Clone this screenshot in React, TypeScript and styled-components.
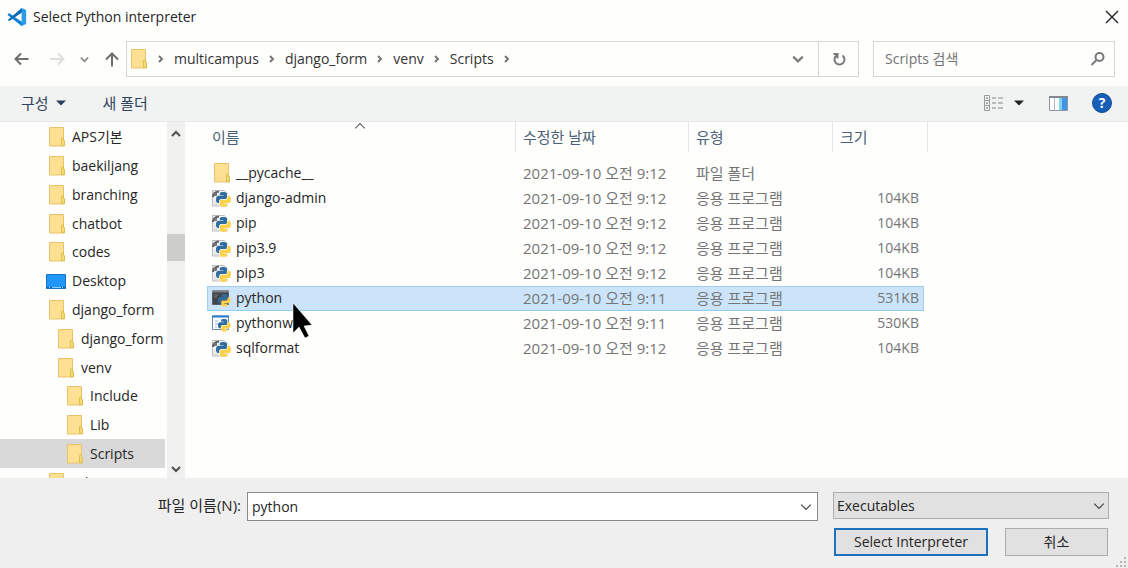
import React from "react";
import styled, { createGlobalStyle, css } from "styled-components";

const GlobalStyle = createGlobalStyle`
  *, *::before, *::after { box-sizing: border-box; }
  body { margin: 0; background: #fefefd; }
  body, button, input, select, table {
    font-family: "Open Sans", "Noto Sans CJK KR", sans-serif;
    font-size: 14px;
    line-height: 20px;
    color: #262626;
  }
  svg { display: block; flex: none; }
`;

const Dialog = styled.main`
  display: flex;
  flex-direction: column;
  height: 100vh;
  background: #fefefd;
`;

const TitleBar = styled.header`
  display: flex;
  align-items: center;
  gap: 6px;
  height: 34px;
  padding: 0 9px 0 7px;
`;

const Title = styled.h1`
  flex: 1;
  margin: 0;
  font-size: 14px;
  font-weight: 400;
`;

const PlainButton = styled.button`
  display: flex;
  align-items: center;
  justify-content: center;
  padding: 0;
  border: 0;
  background: transparent;
`;

const NavBar = styled.nav`
  display: flex;
  align-items: center;
  height: 52px;
  padding: 0 13px 2px;
`;

const HistoryButtons = styled.div`
  display: flex;
  align-items: center;
  gap: 15px;
  width: 113px;
`;

const BackForward = styled.div`
  display: flex;
  gap: 20px;
`;

const AddressBar = styled.div`
  display: flex;
  flex: 1;
  height: 36px;
  margin-right: 14px;
  border: 1px solid #d6d6d6;
`;

const Crumbs = styled.ol`
  display: flex;
  flex: 1;
  align-items: center;
  margin: 0;
  padding: 0 0 0 1px;
  list-style: none;
`;

const Crumb = styled.li`
  display: flex;
  align-items: center;
  gap: 8px;
  padding-right: 8px;
`;

const CrumbLink = styled.a`
  color: #333;
  text-decoration: none;
`;

const AddressButton = styled(PlainButton)<{ $divided?: boolean }>`
  width: 40px;
  border-left: ${(p) => (p.$divided ? "1px solid #d6d6d6" : "0")};
`;

const SearchBox = styled.label`
  display: flex;
  align-items: center;
  width: 242px;
  height: 36px;
  padding: 0 8px 0 11px;
  border: 1px solid #d6d6d6;
`;

const SearchInput = styled.input`
  flex: 1;
  min-width: 0;
  padding: 0;
  border: 0;
  outline: 0;
  background: transparent;
  &::placeholder { color: #737373; opacity: 1; }
`;

const Toolbar = styled.div`
  display: flex;
  align-items: center;
  height: 36px;
  padding: 0 16px 1px 21px;
  background: #f1f3f3;
  border-bottom: 1px solid #e6eaeb;
`;

const ToolButton = styled(PlainButton)<{ $gap: number }>`
  gap: 7px;
  margin-right: ${(p) => p.$gap}px;
  color: #33435c;
  font-size: 15px;
`;

const HelpButton = styled(PlainButton)`
  width: 20px;
  height: 20px;
  border: 1px solid #0f4a94;
  border-radius: 50%;
  background: #155fb8;
  color: #fff;
  font-weight: 700;
`;

const Spacer = styled.div`
  flex: 1;
`;

const Body = styled.div`
  display: flex;
  flex: 1;
  min-height: 0;
`;

const Tree = styled.ul`
  width: 165px;
  margin: 0 2px 0 0;
  padding: 0;
  overflow: hidden;
  list-style: none;
`;

const TreeItem = styled.li<{ $depth: number; $selected?: boolean }>`
  display: flex;
  align-items: center;
  gap: 6px;
  height: 29px;
  padding-left: ${(p) => 46 + p.$depth * 9}px;
  white-space: nowrap;
  background: ${(p) => (p.$selected ? "#d9d9d9" : "transparent")};
  &:nth-child(5n) { height: 28px; }
`;

const ScrollTrack = styled.div`
  display: flex;
  flex-direction: column;
  align-items: center;
  width: 18px;
  padding: 7px 0 4px;
  background: #f0f0f0;
`;

const ScrollThumb = styled.div`
  width: 18px;
  height: 27px;
  margin: 95px 0 auto;
  background: #cdcdcd;
`;

const FilePane = styled.section`
  position: relative;
  flex: 1;
  padding-left: 22px;
  overflow: hidden;
`;

const FileTable = styled.table`
  width: 721px;
  table-layout: fixed;
  border-spacing: 0;
`;

const HeadCell = styled.th`
  position: relative;
  height: 30px;
  padding: 0 8px 0 7px;
  border-right: 1px solid #e3e6e8;
  color: #4c6079;
  font-size: 15px;
  font-weight: 400;
  text-align: left;
  &:first-child { padding-left: 5px; }
`;

const SortMark = styled.span`
  position: absolute;
  top: -2px;
  left: 50%;
  margin-left: -7px;
`;

const GapRow = styled.tr`
  height: 9px;
`;

const selectedRow = css`
  td {
    background: #cce4fa;
    box-shadow: inset 0 1px #a3cdef, inset 0 -1px #8fccf6;
  }
  td:first-child { box-shadow: inset 1px 1px #a3cdef, inset 0 -1px #8fccf6; }
  td:last-child { box-shadow: inset -1px 1px #a3cdef, inset 0 -1px #8fccf6; }
`;

const FileRow = styled.tr<{ $selected: boolean }>`
  height: 25px;
  ${(p) => p.$selected && selectedRow}
`;

const Cell = styled.td<{ $right?: boolean }>`
  padding: 0 ${(p) => (p.$right ? 5 : 0)}px 2px 7px;
  color: #757575;
  font-size: ${(p) => (p.$right ? 14 : 15)}px;
  text-align: ${(p) => (p.$right ? "right" : "left")};
  white-space: nowrap;
`;

const NameCell = styled.td`
  padding: 0 0 1px 4px;
`;

const FileName = styled.div`
  display: flex;
  align-items: center;
  gap: 5px;
`;

const Pointer = styled.div`
  position: absolute;
  top: 180px;
  left: 107px;
`;

const Footer = styled.footer`
  position: relative;
  height: 90px;
  padding: 14px 19px 0 0;
  background: #efefef;
`;

const FieldRow = styled.div`
  display: flex;
  align-items: flex-start;
`;

const FieldLabel = styled.label`
  width: 247px;
  padding: 3px 6px 0 0;
  font-size: 15px;
  text-align: right;
`;

const Combo = styled.div`
  display: flex;
  flex: 1;
  height: 29px;
  margin-right: 15px;
  border: 1px solid #8a8a8a;
  background: #fff;
`;

const NameInput = styled.input`
  flex: 1;
  min-width: 0;
  padding: 0 4px;
  border: 0;
  outline: 0;
  background: transparent;
`;

const ComboButton = styled(PlainButton)`
  width: 22px;
`;

const SelectWrap = styled.div`
  display: grid;
  align-items: center;
  width: 276px;
  > * { grid-area: 1 / 1; }
  > svg { justify-self: end; margin-right: 4px; pointer-events: none; }
`;

const TypeSelect = styled.select`
  appearance: none;
  width: 100%;
  height: 27px;
  padding: 0 3px;
  border: 1px solid #adadad;
  border-radius: 0;
  background: #e1e1e1;
`;

const Actions = styled.div`
  display: flex;
  justify-content: flex-end;
  gap: 17px;
  padding: 7px 1px 0 0;
`;

const ActionButton = styled.button<{ $primary?: boolean }>`
  width: ${(p) => (p.$primary ? 154 : 103)}px;
  height: 28px;
  padding: 0;
  border: ${(p) => (p.$primary ? "2px solid #1c72bb" : "1px solid #adadad")};
  background: #e1e1e1;
`;

const Grip = styled.div`
  position: absolute;
  right: 2px;
  bottom: 1px;
`;

type Dir = "up" | "down" | "right";

const chevrons: Record<Dir, string> = {
  up: "M1 7 5 3 9 7",
  down: "M1 3 5 7 9 3",
  right: "M3 2 6 5 3 8",
};

const Chevron = ({ dir, size = 10, weight = 2, color = "#666" }: { dir: Dir; size?: number; weight?: number; color?: string }) => (
  <svg width={size} height={size} viewBox="0 0 10 10" fill="none" stroke={color} strokeWidth={weight} aria-hidden>
    <path d={chevrons[dir]} />
  </svg>
);

const Caret = ({ color }: { color: string }) => (
  <svg width="10" height="6" viewBox="0 0 10 6" aria-hidden>
    <path d="M0 0.5h10L5 5.5z" fill={color} />
  </svg>
);

const FolderIcon = () => (
  <svg width="20" height="20" viewBox="0 0 20 20" aria-hidden>
    <path d="M3.5.5h14v12l1 1v5.500h-15z" fill="#fde092" stroke="#e9c26a" />
    <path d="M15.500 18.500v-7l2-1v3l1 .5v4.500z" fill="#f8d877" stroke="#dcc04c" />
  </svg>
);

const DesktopIcon = () => (
  <svg width="20" height="20" viewBox="0 0 20 20" aria-hidden>
    <path d="M.5 3.500h19v14H.5z" fill="#2196f8" stroke="#1673cc" />
    <path d="M1 16.500h18" stroke="#0d5fae" />
    <path d="M3 16.500h1M6 16.500h9M16 16.500h1" stroke="#8fd0ff" />
  </svg>
);

const SNAKE =
  "M14.25.18l.9.2.73.26.59.3.45.32.34.34.25.34.16.33.1.3.04.26.02.2-.01.13V8.5l-.05.63-.13.55-.21.46-.26.38-.3.31-.33.25-.35.19-.35.14-.33.1-.3.07-.26.04-.21.02H8.77l-.69.05-.59.14-.5.22-.41.27-.33.32-.27.35-.2.36-.15.37-.1.35-.07.32-.04.27-.02.21v3.06H3.17l-.21-.03-.28-.07-.32-.12-.35-.18-.36-.26-.36-.36-.35-.46-.32-.59-.28-.73-.21-.88-.14-1.05-.05-1.23.06-1.22.16-1.04.24-.87.32-.71.36-.57.4-.44.42-.33.42-.24.4-.16.36-.1.32-.05.24-.01h.16l.06.01h8.16v-.83H6.18l-.01-2.75-.02-.37.05-.34.11-.31.17-.28.25-.26.31-.23.38-.2.44-.18.51-.15.58-.12.64-.1.71-.06.77-.04.84-.02 1.27.05z";

const Snakes = ({ transform, halo }: { transform: string; halo?: string }) => (
  <g transform={transform} stroke={halo} strokeWidth="2" paintOrder="stroke">
    <path d={SNAKE} fill="#2f6da0" />
    <path d={SNAKE} fill="#fbd24a" transform="rotate(180 12 12)" />
  </g>
);

const ScriptIcon = () => (
  <svg width="20" height="19" viewBox="0 0 20 19" aria-hidden>
    <path d="M1.500 1.500h12l3 3v12.500h-15z" fill="#eff0f1" stroke="#babdc0" />
    <path d="M2 8C2 4 4 3 8 2.500" fill="none" stroke="#5c6063" strokeWidth="2" />
    <path d="M3 4h3v3H3z" fill="#73777a" />
    <path d="M3 15h5M3 12h2" stroke="#cdd0d3" />
    <Snakes transform="translate(5 3) scale(.62)" halo="#f7f8f9" />
  </svg>
);

const ConsoleIcon = ({ dark }: { dark: boolean }) => (
  <svg width="20" height="19" viewBox="0 0 20 19" aria-hidden>
    <path d="M1.500 2h16v13.500h-16z" fill={dark ? "#434548" : "#fafbfc"} stroke={dark ? "#55606b" : "#6b8db3"} />
    <path d="M1 2.500h17" stroke={dark ? "#7d8287" : "#2c7dcc"} strokeWidth="2" />
    {dark ? (
      <path d="M3 6h4M3 8h3" stroke="#777b80" />
    ) : (
      <path d="M4 7h3M4 10h3M4 13h2" stroke="#92b8dd" />
    )}
    <Snakes transform="translate(7 5) scale(.52)" />
  </svg>
);

const CodeLogo = () => (
  <svg width="20" height="20" viewBox="0 0 24 24" aria-hidden>
    <path d="M1 8.500 2.700 7.500 18 18v5L1 10z" fill="#0f7fd0" />
    <path d="M1 15.500 18 1v5.500L2.700 16.800 1 16z" fill="#0768b3" />
    <path d="M17 .8 23 3.500v17L17 23.200l-1-1.200c1 .5 1.500 0 1.500-1V3c0-1-.5-1.500-1.500-1z" fill="#2b9cec" />
  </svg>
);

const Arrow = ({ d, color }: { d: string; color: string }) => (
  <svg width="16" height="16" viewBox="0 0 16 16" fill="none" stroke={color} strokeWidth="2" aria-hidden>
    <path d={d} />
  </svg>
);

type Node = { name: string; depth: number; desktop?: boolean; selected?: boolean };

const tree: Node[] = [
  { name: "APS기본", depth: 0 },
  { name: "baekiljang", depth: 0 },
  { name: "branching", depth: 0 },
  { name: "chatbot", depth: 0 },
  { name: "codes", depth: 0 },
  { name: "Desktop", depth: 0, desktop: true },
  { name: "django_form", depth: 0 },
  { name: "django_form", depth: 1 },
  { name: "venv", depth: 1 },
  { name: "Include", depth: 2 },
  { name: "Lib", depth: 2 },
  { name: "Scripts", depth: 2, selected: true },
  { name: "edit", depth: 0 },
];

type Kind = "folder" | "script" | "console" | "window";
type FileEntry = { name: string; date: string; size: string; kind: Kind; selected?: boolean };

const files: FileEntry[] = [
  { name: "__pycache__", date: "2021-09-10 오전 9:12", size: "", kind: "folder" },
  { name: "django-admin", date: "2021-09-10 오전 9:12", size: "104KB", kind: "script" },
  { name: "pip", date: "2021-09-10 오전 9:12", size: "104KB", kind: "script" },
  { name: "pip3.9", date: "2021-09-10 오전 9:12", size: "104KB", kind: "script" },
  { name: "pip3", date: "2021-09-10 오전 9:12", size: "104KB", kind: "script" },
  { name: "python", date: "2021-09-10 오전 9:11", size: "531KB", kind: "console", selected: true },
  { name: "pythonw", date: "2021-09-10 오전 9:11", size: "530KB", kind: "window" },
  { name: "sqlformat", date: "2021-09-10 오전 9:12", size: "104KB", kind: "script" },
];

const FileIcon = ({ kind }: { kind: Kind }) => {
  if (kind === "folder") return <FolderIcon />;
  if (kind === "script") return <ScriptIcon />;
  return <ConsoleIcon dark={kind === "console"} />;
};

export default function App() {
  return (
    <Dialog>
      <GlobalStyle />
      <TitleBar>
        <CodeLogo />
        <Title>Select Python interpreter</Title>
        <PlainButton aria-label="닫기">
          <svg width="14" height="14" viewBox="0 0 14 14" stroke="#222" strokeWidth="1.400" aria-hidden>
            <path d="M1 1l12 12M13 1 1 13" />
          </svg>
        </PlainButton>
      </TitleBar>

      <NavBar>
        <HistoryButtons>
          <BackForward>
            <PlainButton aria-label="뒤로"><Arrow d="M15.500 8H3M8 2.500 2.500 8 8 13.500" color="#6e6e6e" /></PlainButton>
            <PlainButton aria-label="앞으로"><Arrow d="M1 8h13M9 2.500 14.500 8 9 13.500" color="#dedede" /></PlainButton>
          </BackForward>
          <PlainButton aria-label="최근 위치"><Chevron dir="down" size={9} color="#8a8a8a" /></PlainButton>
          <PlainButton aria-label="위로"><Arrow d="M8 15.500V3M2 8.500 8 2.500l6 6" color="#6e6e6e" /></PlainButton>
        </HistoryButtons>
        <AddressBar>
          <Crumbs>
            <Crumb><FolderIcon /><Chevron dir="right" color="#777" /></Crumb>
            {["multicampus", "django_form", "venv", "Scripts"].map((name) => (
              <Crumb key={name}>
                <CrumbLink href="#">{name}</CrumbLink>
                <Chevron dir="right" color="#777" />
              </Crumb>
            ))}
          </Crumbs>
          <AddressButton aria-label="이전 위치"><Chevron dir="down" size={12} color="#808080" /></AddressButton>
          <AddressButton aria-label="새로 고침" $divided>
            <svg width="14" height="14" viewBox="0 0 14 14" fill="none" stroke="#777" strokeWidth="2" aria-hidden>
              <path d="M10.500 3.500A5 5 0 1 1 4.500 3.500M1.500 2h4v4.500" />
            </svg>
          </AddressButton>
        </AddressBar>
        <SearchBox>
          <SearchInput placeholder="Scripts 검색" aria-label="Scripts 검색" />
          <svg width="16" height="16" viewBox="0 0 16 16" fill="none" stroke="#777" strokeWidth="2" aria-hidden>
            <circle cx="9.500" cy="6" r="4" />
            <path d="M6.500 9 1.500 14" />
          </svg>
        </SearchBox>
      </NavBar>

      <Toolbar>
        <ToolButton $gap={37}>구성 <Caret color="#2d3f5c" /></ToolButton>
        <ToolButton $gap={0}>새 폴더</ToolButton>
        <Spacer />
        <ToolButton $gap={25} aria-label="보기">
          <svg width="23" height="16" viewBox="0 0 23 16" fill="none" stroke="#999" aria-hidden>
            <path d="M.5.5h5v15h-5zM.5 5.500h5M.5 10.500h5" />
            <path d="M2 3h2M2 8h2M2 13h2" stroke="#666" />
            <path d="M8 3h4M14 3h5M8 8h4M14 8h5M8 13h4M14 13h5" stroke="#858585" />
          </svg>
          <Caret color="#222" />
        </ToolButton>
        <ToolButton $gap={24} aria-label="미리 보기 창">
          <svg width="19" height="15" viewBox="0 0 19 15" aria-hidden>
            <path d="M.5.5h18v14H.5z" fill="#fff" stroke="#8e959c" />
            <path d="M0 1h19" stroke="#808890" strokeWidth="2" />
            <path d="M5.500 2v12" stroke="#b5babf" />
            <path d="M10 2h8v12h-8z" fill="#3f93e8" />
            <path d="M10 2h3v12h-3z" fill="#83d4ef" />
          </svg>
        </ToolButton>
        <HelpButton aria-label="도움말">?</HelpButton>
      </Toolbar>

      <Body>
        <Tree>
          {tree.map((node, i) => (
            <TreeItem key={i} $depth={node.depth} $selected={node.selected}>
              {node.desktop ? <DesktopIcon /> : <FolderIcon />}
              {node.name}
            </TreeItem>
          ))}
        </Tree>
        <ScrollTrack>
          <Chevron dir="up" color="#505050" />
          <ScrollThumb />
          <Chevron dir="down" color="#505050" />
        </ScrollTrack>
        <FilePane>
          <FileTable>
            <colgroup>
              <col style={{ width: 309 }} />
              <col style={{ width: 173 }} />
              <col style={{ width: 144 }} />
              <col style={{ width: 91 }} />
              <col />
            </colgroup>
            <thead>
              <tr>
                <HeadCell>
                  <SortMark><Chevron dir="up" size={12} weight={1} color="#666" /></SortMark>
                  이름
                </HeadCell>
                <HeadCell>수정한 날짜</HeadCell>
                <HeadCell>유형</HeadCell>
                <HeadCell colSpan={2}>크기</HeadCell>
              </tr>
            </thead>
            <tbody>
              <GapRow />
              {files.map((f) => (
                <FileRow key={f.name} $selected={!!f.selected}>
                  <NameCell><FileName><FileIcon kind={f.kind} />{f.name}</FileName></NameCell>
                  <Cell>{f.date}</Cell>
                  <Cell>{f.kind === "folder" ? "파일 폴더" : "응용 프로그램"}</Cell>
                  <Cell $right>{f.size}</Cell>
                </FileRow>
              ))}
            </tbody>
          </FileTable>
          <Pointer>
            <svg width="22" height="38" viewBox="0 0 22 38" aria-hidden>
              <path d="M1 1v30l6-6 6 11 4-2-5-10 8-1z" fill="#000" stroke="#fff" strokeWidth=".5" />
            </svg>
          </Pointer>
        </FilePane>
      </Body>

      <Footer>
        <FieldRow>
          <FieldLabel htmlFor="file-name">파일 이름(N):</FieldLabel>
          <Combo>
            <NameInput id="file-name" defaultValue="python" />
            <ComboButton aria-label="파일 이름 목록"><Chevron dir="down" size={12} weight={1} color="#444" /></ComboButton>
          </Combo>
          <SelectWrap>
            <TypeSelect aria-label="파일 형식" defaultValue="Executables">
              <option>Executables</option>
            </TypeSelect>
            <Chevron dir="down" size={12} weight={1} color="#444" />
          </SelectWrap>
        </FieldRow>
        <Actions>
          <ActionButton $primary>Select Interpreter</ActionButton>
          <ActionButton>취소</ActionButton>
        </Actions>
        <Grip>
          <svg width="10" height="10" viewBox="0 0 10 10" fill="#b5b5b5" aria-hidden>
            <path d="M8 0h2v2H8zM4 4h2v2H4zM8 4h2v2H8zM0 8h2v2H0zM4 8h2v2H4zM8 8h2v2H8z" />
          </svg>
        </Grip>
      </Footer>
    </Dialog>
  );
}
